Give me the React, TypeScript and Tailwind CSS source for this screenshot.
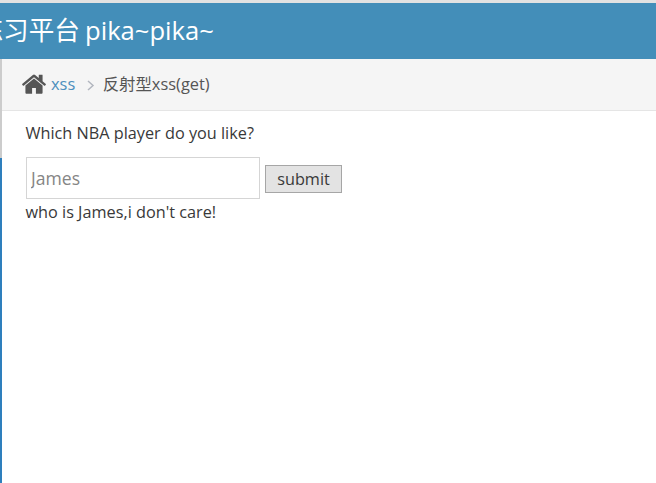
import React from "react";

const font = { fontFamily: '"Open Sans","Noto Sans CJK SC",sans-serif' };

export default function App() {
  return (
    <div className="flex h-[483px] w-[656px] flex-col overflow-hidden bg-white" style={font}>
      <div className="h-[3px] shrink-0 bg-[#e2e2e2]" />
      <header className="flex h-[56px] shrink-0 items-center overflow-hidden bg-[#438eb9]">
        <span className="ml-[-22.5px] whitespace-nowrap text-[25.6px] leading-[34px] text-white [word-spacing:-1.5px]">练习平台 pika~pika~</span>
      </header>
      <div className="flex min-h-0 flex-1">
        <div className="flex w-[2px] shrink-0 flex-col">
          <div className="h-[99px] bg-[#cccccc]" />
          <div className="flex-1 bg-[#2e7fbd]" />
        </div>
        <main className="min-w-0 flex-1">
          <nav className="flex h-[52px] items-center border-b border-[#e5e5e5] bg-[#f5f5f5] pl-[20px] text-[16.4px] text-[#555555]">
            <svg width="24" height="20" viewBox="90 230 1612 1306" fill="#555555" className="mb-[1px] mr-[5px]">
              <path d="M1472 992v480q0 26-19 45t-45 19h-384v-384h-256v384h-384q-26 0-45-19t-19-45v-480q0-1 .5-3t.5-3l575-474 575 474q1 2 1 6zm223-69l-62 74q-8 9-21 11h-3q-13 0-21-7l-692-577-692 577q-12 8-24 7-13-2-21-11l-62-74q-8-10-7-23.5t11-21.5l719-599q32-26 76-26t76 26l244 204v-195q0-14 9-23t23-9h192q14 0 23 9t9 23v408l219 182q10 8 11 21.5t-7 23.5z" />
            </svg>
            <span className="text-[#4c8fbd]">xss</span>
            <svg width="8" height="11" viewBox="0 0 8 11" fill="none" stroke="#b2b6bf" strokeWidth="1.5" className="ml-[12px] mr-[7.5px] mt-[2px]">
              <path d="M1 1l5 4.5L1 10" />
            </svg>
            <span>反射型xss(get)</span>
          </nav>
          <div className="pl-[23.5px] pt-[11px] text-[16.25px] leading-[22px] text-[#393939]">
            <p>Which NBA player do you like?</p>
            <form className="mt-[13px] flex items-center">
              <input
                readOnly
                placeholder="James"
                className="ml-[0.5px] h-[42px] w-[234px] border border-[#d5d5d5] bg-white pl-[4px] text-[17.6px] text-[#858585] placeholder:text-[#858585] outline-none"
              />
              <button type="button" className="ml-[5px] mt-[2px] h-[28px] w-[77px] border border-[#a6a6a6] bg-[#e3e3e3] text-[16.25px] text-[#393939]">
                submit
              </button>
            </form>
            <p className="mt-[2px]">who is James,i don't care!</p>
          </div>
        </main>
      </div>
    </div>
  );
}
